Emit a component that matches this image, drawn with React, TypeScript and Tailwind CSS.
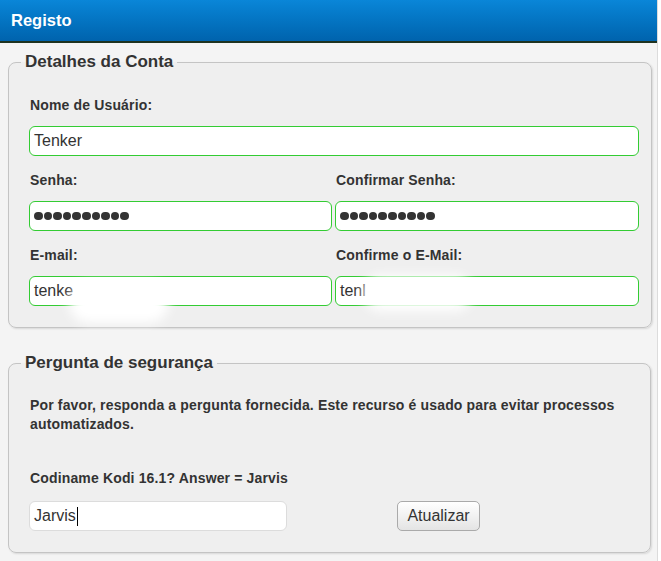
import React from "react";

const font = { fontFamily: '"Liberation Sans", Arial, sans-serif' };

function Field({ children, className = "" }: { children?: React.ReactNode; className?: string }) {
  return (
    <div
      className={`relative h-[30px] rounded-[6px] border border-[#33cc33] bg-white px-[4px] flex items-center text-[16px] text-[#333] overflow-hidden ${className}`}
    >
      {children}
    </div>
  );
}

function Label({ children }: { children: React.ReactNode }) {
  return (
    <div className="mt-[14px] mb-[11px] h-[20px] leading-[20px] text-[14px] tracking-[0.15px] font-bold text-[#333] pl-[1px]">
      {children}
    </div>
  );
}

function Dots() {
  return (
    <span className="flex gap-[1px] items-center">
      {Array.from({ length: 10 }).map((_, i) => (
        <span key={i} className="inline-block w-[8.6px] h-[8.6px] rounded-full bg-[#333]" />
      ))}
    </span>
  );
}

export default function App() {
  return (
    <div style={font} className="w-[661px] h-[561px] bg-white overflow-hidden">
      <div className="w-[658px] h-[561px] bg-[#f4f4f4] border-r border-[#dcdcdc]">
        <div className="h-[43px] bg-gradient-to-b from-[#0a86d8] to-[#0063ad] border-b-2 border-[#1e3320] flex items-center pl-[11px]">
          <span className="text-white font-bold text-[16.5px]">Registo</span>
        </div>

        <fieldset className="ml-[8px] mt-[9px] w-[643px] rounded-[8px] border border-[#c4c4c4] bg-[#efefef] px-[12px] pb-[21px] pt-[9px] shadow-[1px_1px_2px_rgba(0,0,0,0.12)]">
          <legend className="px-[4px] text-[17px] font-bold text-[#333] leading-[20px]">Detalhes da Conta</legend>
          <div className="pl-[8px]">
            <Label>Nome de Usuário:</Label>
            <Field>Tenker</Field>
            <div className="grid grid-cols-[303px_304px] gap-x-[3px]">
              <div>
                <Label>Senha:</Label>
                <Field><Dots /></Field>
              </div>
              <div>
                <Label>Confirmar Senha:</Label>
                <Field><Dots /></Field>
              </div>
              <div className="relative">
                <Label>E-mail:</Label>
                <Field>tenke</Field>
                <div className="absolute left-[40px] top-[52px] w-[100px] h-[40px] rounded-full bg-white blur-[6px]" />
              </div>
              <div className="relative">
                <Label>Confirme o E-Mail:</Label>
                <Field>tenl</Field>
                <div className="absolute left-[28px] top-[44px] w-[110px] h-[36px] rounded-full bg-white blur-[6px]" />
              </div>
            </div>
          </div>
        </fieldset>

        <fieldset className="ml-[8px] mt-[25px] w-[643px] rounded-[8px] border border-[#c4c4c4] bg-[#efefef] px-[12px] pb-[21px] pt-[23px] shadow-[1px_1px_2px_rgba(0,0,0,0.12)]">
          <legend className="px-[4px] text-[17px] font-bold text-[#333] leading-[20px]">Pergunta de segurança</legend>
          <div className="pl-[8px]">
            <p className="text-[14px] tracking-[0.15px] font-bold text-[#333] leading-[19px] pl-[1px]">
              Por favor, responda a pergunta fornecida. Este recurso é usado para evitar processos automatizados.
            </p>
            <div className="mt-[35px] mb-[13px] text-[14px] tracking-[0.15px] font-bold text-[#333] leading-[19px] pl-[1px]">
              Codiname Kodi 16.1? Answer = Jarvis
            </div>
            <div className="flex items-center">
              <div className="w-[258px] h-[30px] rounded-[6px] border border-[#dcdcdc] bg-white px-[4px] flex items-center text-[16px] text-[#333]">
                Jarvis
                <span className="inline-block w-px h-[19px] bg-black ml-[1px]" />
              </div>
              <button className="ml-[110px] w-[83px] h-[30px] rounded-[5px] border border-[#aaaaaa] bg-gradient-to-b from-white to-[#e4e4e4] text-[16px] text-[#333]">
                Atualizar
              </button>
            </div>
          </div>
        </fieldset>
      </div>
    </div>
  );
}
